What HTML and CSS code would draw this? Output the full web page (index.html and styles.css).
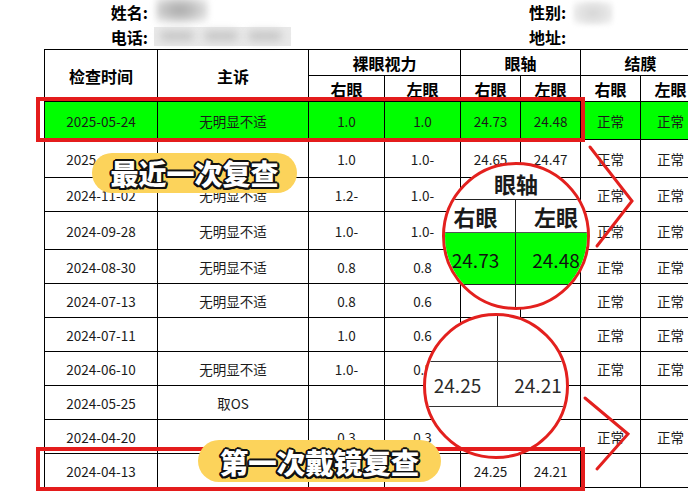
FILE: index.html
```html
<!DOCTYPE html>
<html lang="zh">
<head>
<meta charset="utf-8">
<title>检查记录</title>
<link rel="stylesheet" href="styles.css">
</head>
<body>
<div class="page">
  <div class="info">
    <div class="info-row">
      <span class="lbl lbl-a">姓名:</span>
      <span class="val"><span class="blur blur-name"></span></span>
      <span class="lbl lbl-b">性别:</span>
      <span class="val"><span class="blur blur-sex"></span></span>
    </div>
    <div class="info-row">
      <span class="lbl lbl-a">电话:</span>
      <span class="val"><span class="blur blur-phone"><i></i><i></i><i></i></span></span>
      <span class="lbl lbl-b">地址:</span>
      <span class="val"></span>
    </div>
  </div>

  <div class="sheet">
    <table>
      <colgroup>
        <col class="c-date"><col class="c-comp"><col class="c-va"><col class="c-va">
        <col class="c-sm"><col class="c-sm"><col class="c-sm"><col class="c-sm">
      </colgroup>
      <thead>
        <tr class="hrow">
          <th rowspan="2">检查时间</th>
          <th rowspan="2">主诉</th>
          <th colspan="2">裸眼视力</th>
          <th colspan="2">眼轴</th>
          <th colspan="2">结膜</th>
        </tr>
        <tr class="hrow">
          <th>右眼</th><th>左眼</th><th>右眼</th><th>左眼</th><th>右眼</th><th>左眼</th>
        </tr>
      </thead>
      <tbody>
        <tr class="row-tall hl">
          <td>2025-05-24</td><td>无明显不适</td><td>1.0</td><td>1.0</td><td>24.73</td><td>24.48</td><td>正常</td><td>正常</td>
        </tr>
        <tr class="row-tall">
          <td>2025-02-15</td><td>无明显不适</td><td>1.0</td><td>1.0-</td><td>24.65</td><td>24.47</td><td>正常</td><td>正常</td>
        </tr>
        <tr>
          <td>2024-11-02</td><td>无明显不适</td><td>1.2-</td><td>1.0-</td><td></td><td></td><td>正常</td><td>正常</td>
        </tr>
        <tr class="row-tall">
          <td>2024-09-28</td><td>无明显不适</td><td>1.0-</td><td>1.0-</td><td></td><td></td><td>正常</td><td>正常</td>
        </tr>
        <tr>
          <td>2024-08-30</td><td>无明显不适</td><td>0.8</td><td>0.8</td><td></td><td></td><td>正常</td><td>正常</td>
        </tr>
        <tr>
          <td>2024-07-13</td><td>无明显不适</td><td>0.8</td><td>0.6</td><td></td><td></td><td>正常</td><td>正常</td>
        </tr>
        <tr>
          <td>2024-07-11</td><td></td><td>1.0</td><td>0.6</td><td></td><td></td><td>正常</td><td>正常</td>
        </tr>
        <tr>
          <td>2024-06-10</td><td>无明显不适</td><td>1.0-</td><td>0.5</td><td></td><td></td><td>正常</td><td>正常</td>
        </tr>
        <tr>
          <td>2024-05-25</td><td>取OS</td><td></td><td></td><td></td><td></td><td></td><td></td>
        </tr>
        <tr>
          <td>2024-04-20</td><td></td><td>0.3</td><td>0.3</td><td></td><td></td><td>正常</td><td>正常</td>
        </tr>
        <tr>
          <td>2024-04-13</td><td></td><td></td><td></td><td>24.25</td><td>24.21</td><td></td><td></td>
        </tr>
      </tbody>
    </table>
  </div>

  <div class="lens lens-a">
    <div class="lg lg-a">
      <div class="lg-head">眼轴</div>
      <div class="lg-cell lg-l lg-th">右眼</div><div class="lg-cell lg-th">左眼</div>
      <div class="lg-cell lg-l lg-green">24.73</div><div class="lg-cell lg-green">24.48</div>
      <div class="lg-cell lg-l lg-last"></div><div class="lg-cell lg-last"></div>
    </div>
  </div>

  <div class="lens lens-b">
    <div class="lg lg-b">
      <div class="lg-cell lg-l lg-bt"></div><div class="lg-cell lg-bt"></div>
      <div class="lg-cell lg-l lg-bt lg-num">24.25</div><div class="lg-cell lg-bt lg-num">24.21</div>
      <div class="lg-cell"></div><div class="lg-cell"></div>
    </div>
  </div>

  <div class="frame frame-a"></div>
  <div class="frame frame-b"></div>

  <svg class="arrows" width="688" height="491" viewBox="0 0 688 491">
    <polyline points="590,147 632,201 597,246" />
    <polyline points="585,398 628,434 597,469" />
  </svg>

  <div class="pill pill-a">最近一次复查</div>
  <div class="pill pill-b">第一次戴镜复查</div>
</div>
</body>
</html>
```

FILE: styles.css
```css
html, body {
  margin: 0;
  padding: 0;
  background: #fff;
  overflow: hidden;
}

body {
  font-family: "Noto Sans CJK SC", "Noto Sans", sans-serif;
  color: #111;
}

.page {
  position: relative;
  width: 688px;
  height: 491px;
  overflow: hidden;
}

/* ---------- patient info ---------- */
.info {
  display: flex;
  flex-direction: column;
  height: 49px;
}

.info-row {
  display: grid;
  grid-template-columns: 150px 379px 42px 1fr;
  align-items: center;
  height: 24.5px;
}

.lbl {
  font-size: 16px;
  font-weight: 700;
  line-height: 20px;
  color: #000;
  white-space: nowrap;
}

.lbl-a {
  text-align: right;
  padding-right: 2px;
}

.val {
  position: relative;
  height: 100%;
}

.blur {
  position: absolute;
  display: block;
}

.blur-name {
  left: 6px;
  top: -3px;
  width: 52px;
  height: 26px;
  background: radial-gradient(ellipse at 45% 50%, #a9a9a9 0%, #c4c4c4 40%, #e6e6e6 75%, rgba(255,255,255,0) 100%);
  filter: blur(3px);
}

.blur-sex {
  left: 2px;
  top: 1px;
  width: 40px;
  height: 24px;
  background: radial-gradient(ellipse at 50% 50%, #d6d6d6 0%, #e6e6e6 55%, rgba(255,255,255,0) 100%);
  filter: blur(2px);
}

.blur-phone {
  left: 4px;
  top: 2px;
  width: 137px;
  height: 19px;
  background: #e9e9e9;
  display: flex;
  align-items: center;
  gap: 10px;
  padding-left: 6px;
  box-sizing: border-box;
}

.blur-phone i {
  display: block;
  width: 34px;
  height: 10px;
  border-radius: 6px;
  background: #c6c6c6;
  filter: blur(4px);
}

/* ---------- table ---------- */
.sheet {
  padding-left: 44px;
}

table {
  border-collapse: collapse;
  table-layout: fixed;
  width: 655px;
}

.c-date { width: 113px; }
.c-comp { width: 151px; }
.c-va { width: 76px; }
.c-sm { width: 60px; }

th, td {
  border: 1px solid #000;
  padding: 0;
  text-align: center;
  vertical-align: middle;
  white-space: nowrap;
  overflow: hidden;
}

th {
  font-size: 16px;
  font-weight: 700;
  color: #000;
  line-height: 20px;
}

td {
  font-size: 13.5px;
  color: #1a1a1a;
  line-height: 18px;
}

.hrow { height: 26px; }
tbody tr { height: 34px; }
tbody tr.row-tall { height: 38px; }

tr.hl td { background: #00ff00; }

/* ---------- magnifier lenses ---------- */
.lens {
  position: absolute;
  box-sizing: border-box;
  border: 3px solid #e3201e;
  border-radius: 50%;
  background: #fff;
  overflow: hidden;
}

.lens-a {
  left: 442px;
  top: 162px;
  width: 148px;
  height: 148px;
}

.lens-b {
  left: 423px;
  top: 313px;
  width: 146px;
  height: 146px;
}

.lg {
  display: grid;
  grid-template-columns: 80px 80px;
  width: 160px;
}

.lg-a {
  margin-left: -9px;
  grid-template-rows: 35px 33px 52px 40px;
}

.lg-b {
  margin-left: -8px;
  grid-template-rows: 46px 45px 60px;
}

.lg-head {
  grid-column: 1 / 3;
  display: flex;
  align-items: center;
  justify-content: center;
  padding-top: 2px;
  box-sizing: border-box;
  border-bottom: 1.5px solid #222;
  font-size: 22px;
  font-weight: 700;
  color: #1a1a1a;
}

.lg-cell {
  display: flex;
  align-items: center;
  justify-content: center;
  box-sizing: border-box;
}

.lg-l { border-right: 1.5px solid #222; }

.lg-th {
  font-size: 22px;
  font-weight: 700;
  color: #1a1a1a;
  border-bottom: 1px solid #555;
}

.lg-green {
  background: #00ff00;
  font-size: 19px;
  color: #111;
  border-bottom: 1.5px solid #222;
  padding-top: 2px;
}

.lg-bt { border-bottom: 1.5px solid #333; }

.lg-num {
  font-size: 19px;
  color: #2a2a2a;
}

/* ---------- red frames ---------- */
.frame {
  position: absolute;
  box-sizing: border-box;
  border: 4px solid #e41c1c;
}

.frame-a {
  left: 36px;
  top: 97px;
  width: 549px;
  height: 45px;
}

.frame-b {
  left: 36px;
  top: 447px;
  width: 549px;
  height: 44px;
}

/* ---------- arrows ---------- */
.arrows {
  position: absolute;
  left: 0;
  top: 0;
  pointer-events: none;
}

.arrows polyline {
  fill: none;
  stroke: #e3201e;
  stroke-width: 3;
  stroke-linecap: round;
  stroke-linejoin: miter;
}

/* ---------- labels ---------- */
.pill {
  position: absolute;
  display: flex;
  align-items: center;
  justify-content: center;
  background: #fcd35b;
  color: #fff;
  font-weight: 900;
  white-space: nowrap;
  text-shadow:
    2px 0 0 #111, -2px 0 0 #111, 0 2px 0 #111, 0 -2px 0 #111,
    1.5px 1.5px 0 #111, -1.5px 1.5px 0 #111, 1.5px -1.5px 0 #111, -1.5px -1.5px 0 #111,
    2px 1px 0 #111, -2px 1px 0 #111, 1px 2px 0 #111, -1px 2px 0 #111;
}

.pill-a {
  left: 92px;
  top: 153px;
  width: 205px;
  height: 40px;
  border-radius: 20px;
  font-size: 28px;
}

.pill-b {
  left: 198px;
  top: 440px;
  width: 243px;
  height: 42px;
  border-radius: 21px;
  font-size: 28.5px;
}
```
